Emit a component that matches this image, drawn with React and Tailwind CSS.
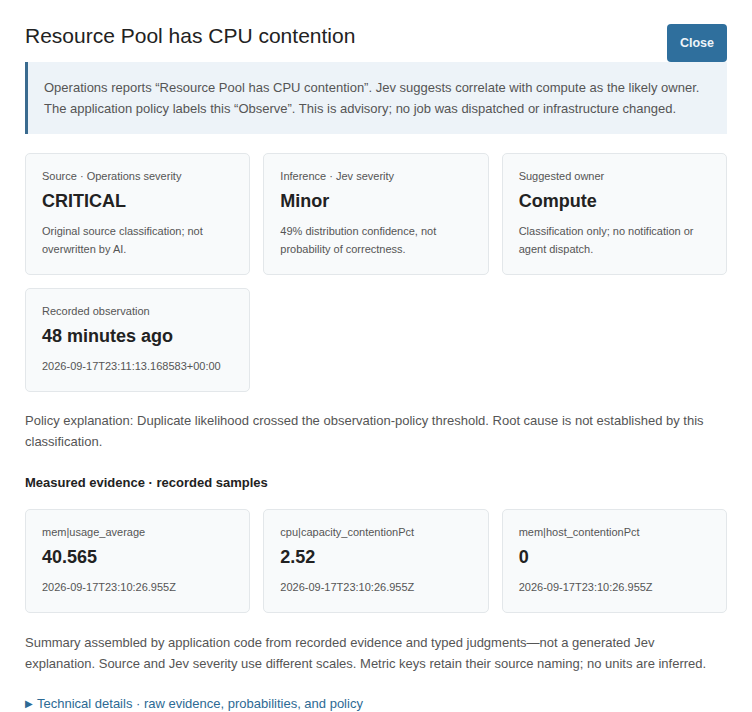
import React from "react";

const cards = [
  {
    label: "Source · Operations severity",
    value: "CRITICAL",
    note: "Original source classification; not overwritten by AI.",
  },
  {
    label: "Inference · Jev severity",
    value: "Minor",
    note: "49% distribution confidence, not probability of correctness.",
  },
  {
    label: "Suggested owner",
    value: "Compute",
    note: "Classification only; no notification or agent dispatch.",
  },
  {
    label: "Recorded observation",
    value: "48 minutes ago",
    note: "2026-09-17T23:11:13.168583+00:00",
  },
];

const metrics = [
  { key: "mem|usage_average", value: "40.565", at: "2026-09-17T23:10:26.955Z" },
  { key: "cpu|capacity_contentionPct", value: "2.52", at: "2026-09-17T23:10:26.955Z" },
  { key: "mem|host_contentionPct", value: "0", at: "2026-09-17T23:10:26.955Z" },
];

const Card = ({ label, value, note }) => (
  <div className="rounded-[5px] border border-[#e3e7ea] bg-[#f8fafb] px-4 pt-[14px] pb-[16px]">
    <div className="text-[11px] leading-[16px] text-[#555]">{label}</div>
    <div className="mt-[5px] text-[18px] font-bold leading-[24px] text-[#222]">{value}</div>
    <div className="mt-[9px] text-[11px] leading-[18px] text-[#555]">{note}</div>
  </div>
);

export default function App() {
  return (
    <div
      className="min-h-screen bg-white px-[25px] pt-[22px] pb-4"
      style={{ fontFamily: '"Liberation Sans", Arial, sans-serif' }}
    >
      <div className="flex items-start justify-between">
        <h1 className="text-[21px] leading-[28px] font-normal text-[#222]">
          Resource Pool has CPU contention
        </h1>
        <button className="mt-[2px] h-[38px] w-[60px] rounded-[4px] bg-[#2f6f9d] text-[12.5px] font-bold text-[#eef4f8]">
          Close
        </button>
      </div>

      <div className="border-l-[3px] border-[#3a6b8f] bg-[#edf3f8] py-[15px] pl-4 pr-4 text-[13px] leading-[21px] text-[#555]">
        Operations reports “Resource Pool has CPU contention”. Jev suggests correlate with compute as the likely owner.
        The application policy labels this “Observe”. This is advisory; no job was dispatched or infrastructure changed.
      </div>

      <div className="mt-[19px] grid grid-cols-3 gap-x-[13px] gap-y-[13px]">
        {cards.map((c) => (
          <Card key={c.label} {...c} />
        ))}
      </div>

      <p className="mt-[18px] text-[13px] leading-[21px] text-[#555]">
        Policy explanation: Duplicate likelihood crossed the observation-policy threshold. Root cause is not established by this
        classification.
      </p>

      <h2 className="mt-[21px] text-[13px] font-bold leading-[20px] text-[#222]">
        Measured evidence · recorded samples
      </h2>

      <div className="mt-[16px] grid grid-cols-3 gap-[13px]">
        {metrics.map((m) => (
          <Card key={m.key} label={m.key} value={m.value} note={m.at} />
        ))}
      </div>

      <p className="mt-[19px] text-[13px] leading-[21px] text-[#555]">
        Summary assembled by application code from recorded evidence and typed judgments—not a generated Jev
        explanation. Source and Jev severity use different scales. Metric keys retain their source naming; no units are inferred.
      </p>

      <details className="mt-[19px] text-[13px] leading-[21px] text-[#2d6a94]">
        <summary className="flex cursor-pointer list-none items-center [&::-webkit-details-marker]:hidden">
          <span className="mr-[4px] text-[10px] leading-none">▶</span>
          Technical details · raw evidence, probabilities, and policy
        </summary>
      </details>
    </div>
  );
}
